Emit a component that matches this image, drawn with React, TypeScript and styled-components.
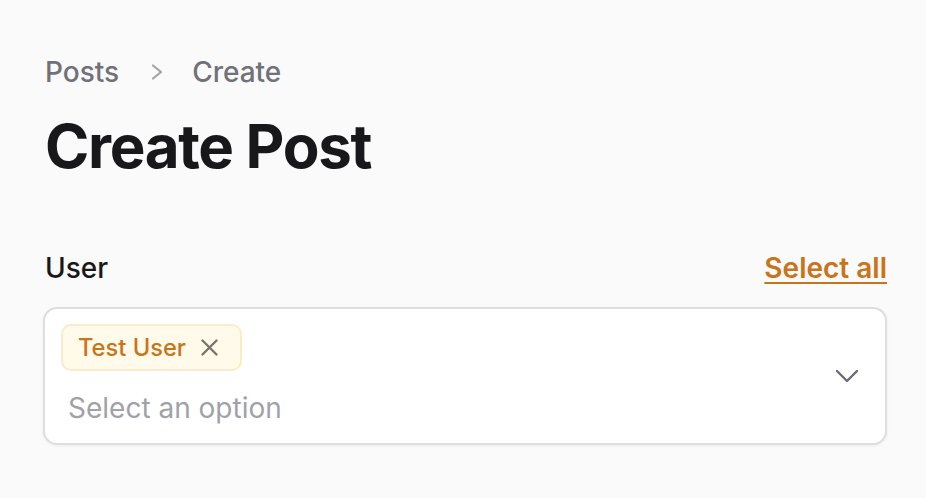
import React from "react";
import styled, { createGlobalStyle } from "styled-components";

const Global = createGlobalStyle`
  html, body { margin: 0; padding: 0; background: #fafafa; }
  body { font-family: Inter, "Noto Sans", sans-serif; -webkit-font-smoothing: antialiased; }
`;

const Page = styled.div`
  width: 926px;
  height: 498px;
  box-sizing: border-box;
  padding: 52px 39px 0 43px;
  background: #fafafa;
`;

const Breadcrumbs = styled.nav`
  display: flex;
  align-items: center;
  padding-left: 2px;
  font-size: 28px;
  font-weight: 500;
  color: #71717a;
  height: 40px;
`;

const Crumb = styled.span``;

const CrumbSep = styled.svg`
  margin: 0 29px 0 32px;
  flex: none;
`;

const Title = styled.h1`
  margin: 18px 0 0 2px;
  font-size: 60px;
  font-weight: 700;
  letter-spacing: -0.022em;
  color: #18181b;
  line-height: 72px;
`;

const FieldHeader = styled.div`
  display: flex;
  justify-content: space-between;
  align-items: center;
  margin-top: 66px;
  padding-left: 2px;
  height: 40px;
`;

const Label = styled.label`
  font-size: 28px;
  font-weight: 500;
  color: #18181b;
`;

const Link = styled.a`
  font-size: 28px;
  font-weight: 600;
  color: #c8741a;
  text-decoration: underline;
  text-decoration-thickness: 2px;
  text-underline-offset: 4px;
`;

const Select = styled.div`
  margin-top: 19px;
  height: 138px;
  box-sizing: border-box;
  border: 2px solid #dedee0;
  border-radius: 14px;
  background: #fff;
  box-shadow: 0 1px 3px rgba(0,0,0,0.06);
  display: flex;
  align-items: center;
  padding: 15px 26px 15px 16px;
`;

const Values = styled.div`
  flex: 1;
  display: flex;
  flex-direction: column;
  align-items: flex-start;
  gap: 17px;
`;

const Chip = styled.span`
  display: inline-flex;
  align-items: center;
  gap: 15px;
  height: 47px;
  box-sizing: border-box;
  padding: 0 22px 0 15px;
  border-radius: 10px;
  background: #fffaea;
  border: 2px solid #faecc8;
  color: #c8741a;
  font-size: 23.7px;
  font-weight: 500;
`;

const Placeholder = styled.span`
  font-size: 28px;
  line-height: 40px;
  color: #a1a1aa;
  padding-left: 7px;
`;

const Chevron = () => (
  <svg width="24" height="14" viewBox="0 0 24 14" fill="none" stroke="#6b6b78" strokeWidth="2.4" strokeLinecap="round" strokeLinejoin="round">
    <path d="M2 2l10 10 10-10" />
  </svg>
);

const SmallChevron = () => (
  <CrumbSep width="12" height="16" viewBox="0 0 12 16" fill="none" stroke="#a1a1aa" strokeWidth="2.2" strokeLinecap="round" strokeLinejoin="round">
    <path d="M2 1.5l8 6.5-8 6.5" />
  </CrumbSep>
);

const XIcon = () => (
  <svg width="17" height="17" viewBox="0 0 17 17" fill="none" stroke="#76766d" strokeWidth="2.4" strokeLinecap="round">
    <path d="M1.5 1.5l14 14M15.5 1.5l-14 14" />
  </svg>
);

export default function App() {
  return (
    <Page>
      <Global />
      <Breadcrumbs>
        <Crumb>Posts</Crumb>
        <SmallChevron />
        <Crumb>Create</Crumb>
      </Breadcrumbs>
      <Title>Create Post</Title>
      <FieldHeader>
        <Label>User</Label>
        <Link>Select all</Link>
      </FieldHeader>
      <Select>
        <Values>
          <Chip>
            Test User
            <XIcon />
          </Chip>
          <Placeholder>Select an option</Placeholder>
        </Values>
        <Chevron />
      </Select>
    </Page>
  );
}
